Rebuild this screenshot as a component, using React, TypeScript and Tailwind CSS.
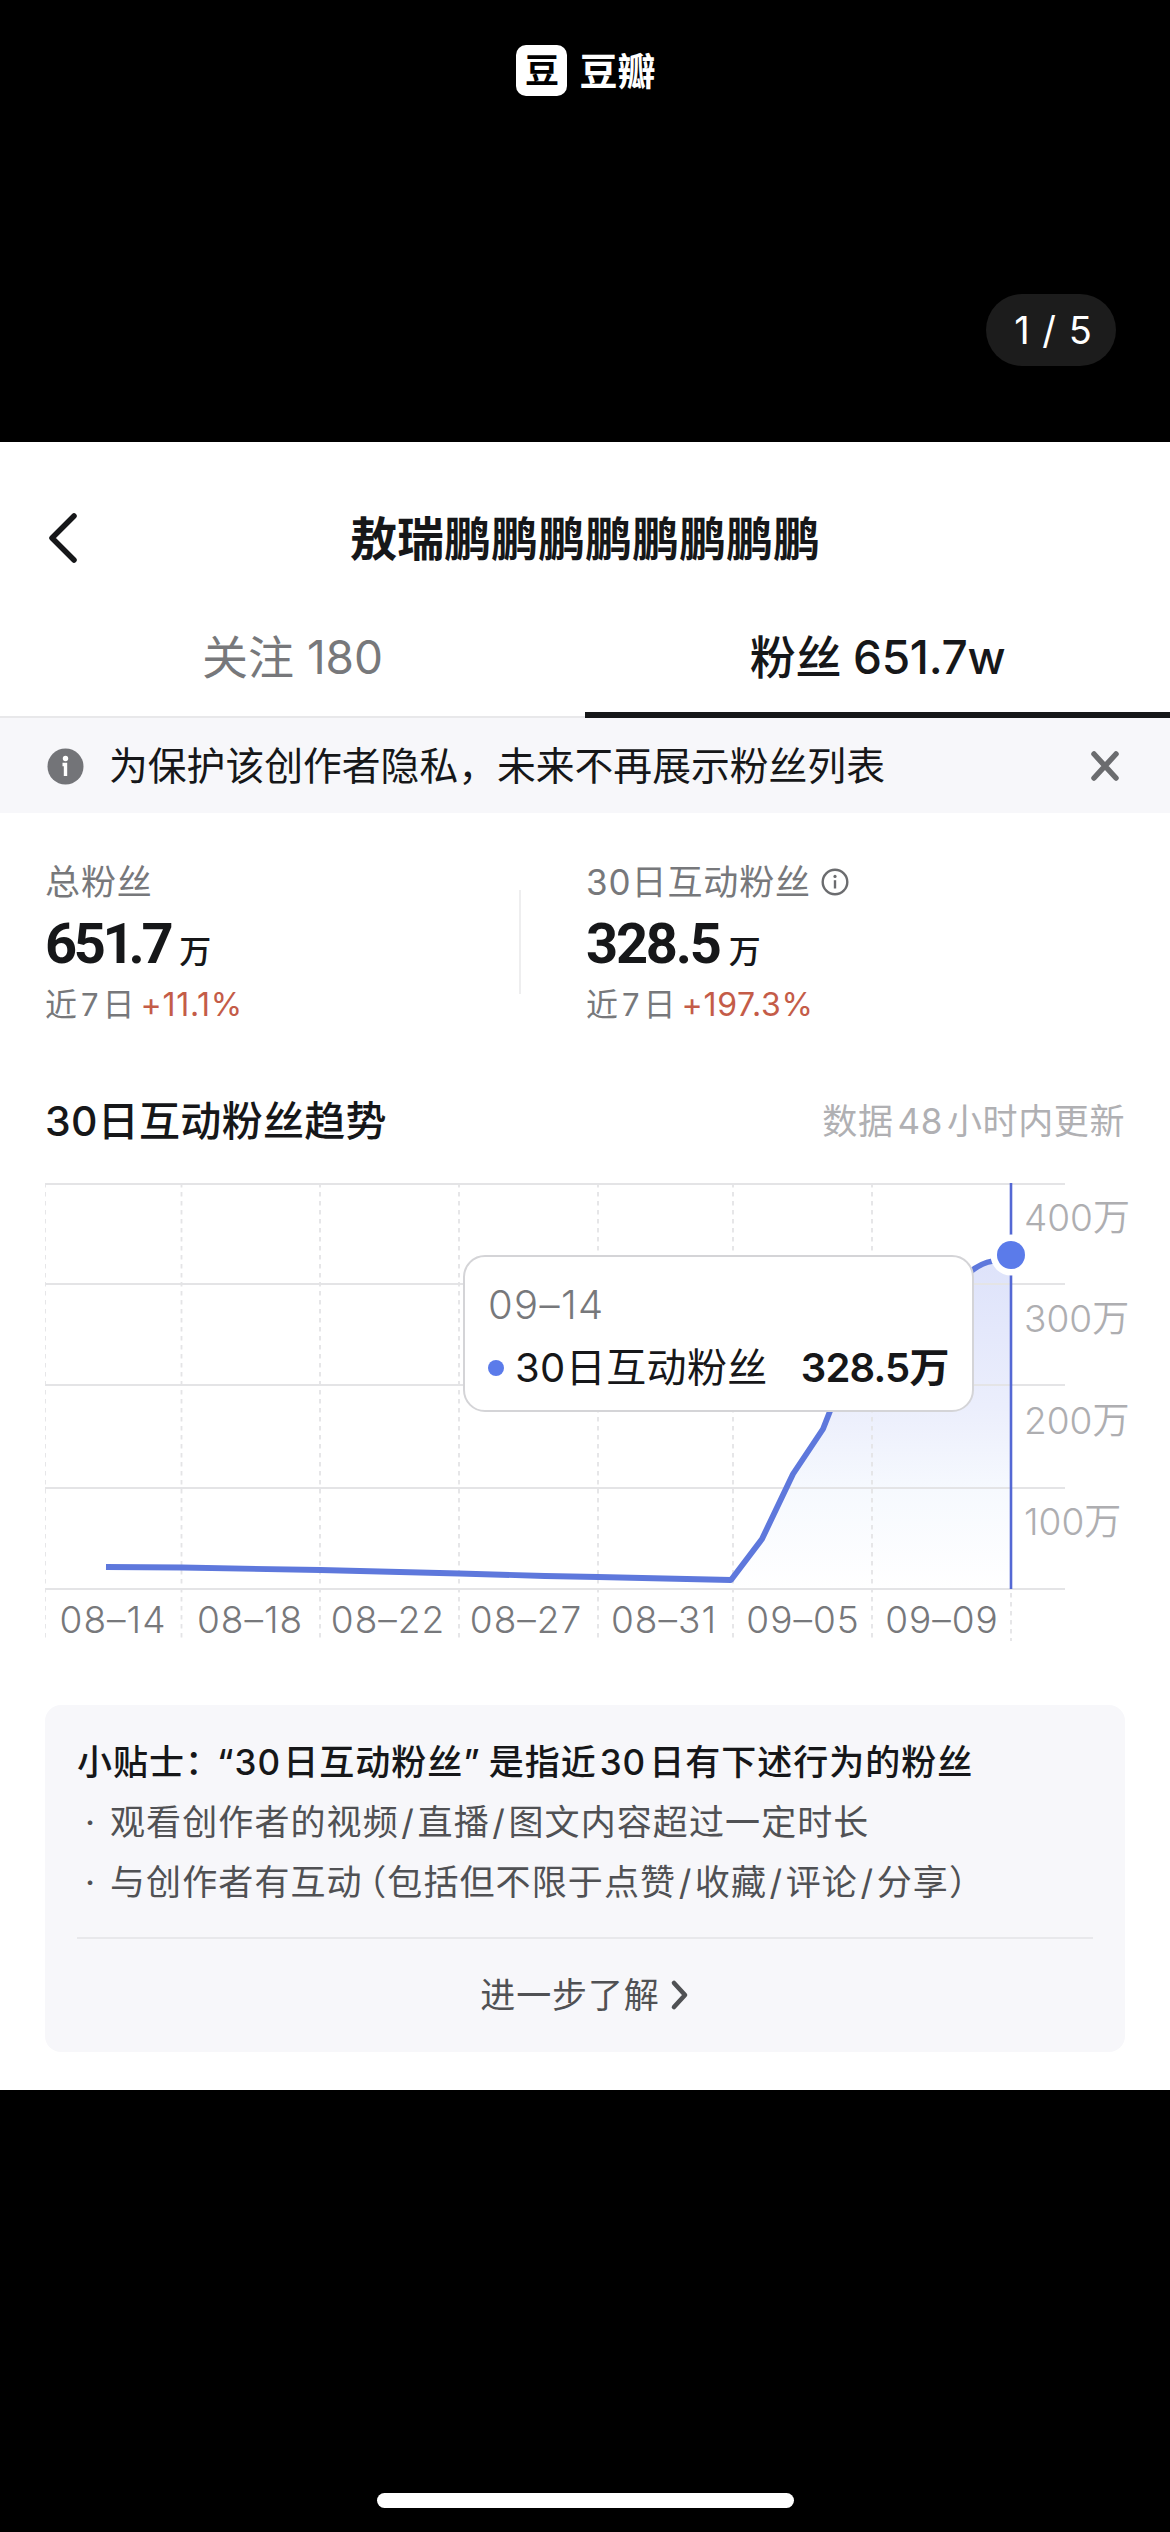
import React from 'react';
import { clsx } from 'clsx';

const GRID_Y = [1, 101, 202, 305, 406];
const GRID_X = [0, 136.5, 275, 414, 553, 688, 827];

const DAYS = [
  { label: '08–14', x: 68 },
  { label: '08–18', x: 205 },
  { label: '08–22', x: 343 },
  { label: '08–27', x: 481 },
  { label: '08–31', x: 619 },
  { label: '09–05', x: 758 },
  { label: '09–09', x: 897 },
];

const LEVELS = [
  { label: '400万', y: 48 },
  { label: '300万', y: 149 },
  { label: '200万', y: 251 },
  { label: '100万', y: 352 },
];

const FLAT = 'M61 384L137 384.5L275 387L414 390.5L500 393L553 394L686 397';
const RISE = 'L717 356L748 291L778 246L800 190L850 140L900 108L925 89Q936 80 948 78L966 72';

const TIPS = [
  '观看创作者的视频/直播/图文内容超过一定时长',
  '与创作者有互动（包括但不限于点赞/收藏/评论/分享）',
];

type StatProps = {
  label: string;
  value: React.ReactNode;
  growth: string;
  info?: boolean;
  className?: string;
};

function Stat({ label, value, growth, info, className }: StatProps) {
  return (
    <div className={clsx('flex flex-col', className)}>
      <div className="flex h-10 items-center text-[35px] leading-10 tracking-[0.9px] text-[#77787b]">
        <span>{label}</span>
        {info && (
          <svg className="ml-2.5 size-7" viewBox="0 0 28 28" fill="none" stroke="#6b6c6f">
            <circle cx="14" cy="14" r="12.3" strokeWidth="2.4" />
            <path d="M14 12.2V20.5" strokeWidth="2.4" />
            <circle cx="14" cy="8.4" r="1.6" fill="#6b6c6f" stroke="none" />
          </svg>
        )}
      </div>
      <div className="mt-[9px] flex h-[66px] items-baseline text-[#161719]">
        <span className="font-['Roboto'] text-[56px] leading-[66px] font-bold tracking-[-2.2px]">{value}</span>
        <span className="ml-[9px] text-[32px] font-medium">万</span>
      </div>
      <div className="mt-2 flex h-10 items-center text-[32px] leading-10 text-[#77787b]">
        <span>近</span>
        <span className="mx-1 text-[31px]">7</span>
        <span>日</span>
        <span className="ml-1.5 text-[32px] tracking-[0.7px] text-[#c45c48]">{growth}</span>
      </div>
    </div>
  );
}

// Slashes get a little air, the opening bracket takes half a cell
function TipText({ text }: { text: string }) {
  return (
    <span>
      {text.split(/([/（])/).map((part, i) => {
        if (part === '/') return <span key={i} className="mx-[2.5px]">/</span>;
        if (part === '（') return <span key={i} className="ml-1.5 [font-feature-settings:'halt']">（</span>;
        return part;
      })}
    </span>
  );
}

function TrendChart() {
  return (
    <div className="relative mt-[38px] ml-[45px] h-[460px] w-[1085px]">
      <svg width="1085" height="460" viewBox="0 0 1085 460" fill="none">
        <defs>
          <linearGradient id="area" x1="0" y1="72" x2="0" y2="406" gradientUnits="userSpaceOnUse">
            <stop offset="0" stopColor="#dde2fa" />
            <stop offset="0.45" stopColor="#ebeefc" />
            <stop offset="0.7" stopColor="#f6f9fe" />
            <stop offset="1" stopColor="#ffffff" />
          </linearGradient>
        </defs>
        <path d={`M686 397${RISE}V406H686Z`} fill="url(#area)" />
        {GRID_Y.map((y) => (
          <path key={y} d={`M0 ${y}H1020`} stroke="#e4e4e6" strokeWidth="2" />
        ))}
        {GRID_X.map((x) => (
          <path key={x} d={`M${x} 0V458`} stroke="#e4e4e6" strokeWidth="1.8" strokeDasharray="4.5 4.5" />
        ))}
        <path d="M966 410V458" stroke="#e4e4e6" strokeWidth="1.8" strokeDasharray="4.5 4.5" />
        <path d={FLAT + RISE} stroke="#5e78dc" strokeWidth="5.8" strokeLinejoin="round" />
        <path d="M966 0V406" stroke="#5468d4" strokeWidth="2.6" />
        <circle cx="966" cy="72" r="20.5" fill="#fff" />
        <circle cx="966" cy="72" r="14" fill="#5b7bea" />
        <g fill="#77787b" fontSize="37" letterSpacing="1" textAnchor="middle" fontWeight="350">
          {DAYS.map((d) => (
            <text key={d.label} x={d.x} y="450">{d.label}</text>
          ))}
        </g>
        <g fill="#aeaeb1" fontSize="37" fontWeight="350">
          {LEVELS.map((l) => (
            <text key={l.label} x="979" y={l.y}>{l.label}</text>
          ))}
        </g>
      </svg>

      {/* Tooltip */}
      <div className="absolute top-[72px] left-[418px] h-[157px] w-[511px] rounded-[22px] border-2 border-[#d4d4d7] bg-white pt-6 pl-[23px]">
        <div className="h-[48px] text-[40px] leading-[48px] font-[350] tracking-[1.4px] text-[#77787b]">09–14</div>
        <div className="mt-[14px] flex h-[50px] items-center text-[40px] leading-[50px] text-[#161719]">
          <span className="mr-[11px] size-4 rounded-full bg-[#5b7bea]" />
          <span className="tracking-[0.4px]">30日互动粉丝</span>
          <span className="ml-[33px] font-semibold tracking-[-0.8px]">328.5万</span>
        </div>
      </div>
    </div>
  );
}

export default function App() {
  return (
    <div lang="zh-CN" className="flex h-[2532px] w-[1170px] flex-col overflow-hidden bg-black font-['Inter','Noto_Sans_CJK_SC',sans-serif] whitespace-nowrap">
      <div className="relative h-[442px] shrink-0">
        <div className="flex justify-center pt-[45px] pl-0.5">
          <div className="flex h-[51px] items-center gap-3 text-white">
            <div className="flex size-[51px] items-center justify-center rounded-[10px] bg-white text-[34px] leading-none font-bold text-black">豆</div>
            <span className="text-[38px] leading-none font-bold">豆瓣</span>
          </div>
        </div>
        <div className="absolute top-[294px] left-[986px] flex h-[72px] w-[130px] items-center justify-center rounded-full bg-[#1c1c1c] pl-1 text-[38px] text-white [word-spacing:2px]">1 / 5</div>
      </div>

      <div className="flex h-[1648px] shrink-0 flex-col bg-white">
        <header className="relative flex h-[156px] items-center justify-center pt-9">
          <svg className="absolute top-[69px] left-[46px]" width="34" height="54" viewBox="0 0 34 54" fill="none" stroke="#161719" strokeWidth="5.5" strokeLinecap="round" strokeLinejoin="round">
            <path d="M28 5L6 27L28 49" />
          </svg>
          <h1 className="text-[47px] leading-none font-bold text-[#161719]">敖瑞鹏鹏鹏鹏鹏鹏鹏鹏</h1>
        </header>

        <nav className="grid h-[120px] grid-cols-2 border-b-2 border-[#e8e8ea] text-[46px]">
          <div className="flex items-center justify-center text-[#77787b]">关注 180</div>
          <div className="relative flex items-center justify-center font-medium tracking-[-0.3px] text-[#161719]">
            粉丝 651.7w
            <div className="absolute -bottom-0.5 left-0 h-[6px] w-full bg-[#161719]" />
          </div>
        </nav>

        <div className="flex h-[95px] items-center bg-[#f7f7fa] pt-px pr-[50px] pl-[47px]">
          <svg width="37" height="37" viewBox="0 0 37 37">
            <circle cx="18.5" cy="18.5" r="18" fill="#737478" />
            <circle cx="18.5" cy="10.5" r="2.7" fill="#fff" />
            <path d="M15.5 16.5H18.5V28" stroke="#fff" strokeWidth="3.4" fill="none" />
          </svg>
          <span className="ml-[25px] text-[38.8px] text-[#161719]">为保护该创作者隐私，未来不再展示粉丝列表</span>
          <svg className="ml-auto" width="30" height="32" viewBox="0 0 30 32" stroke="#6b6c6f" strokeWidth="5.5" strokeLinecap="round">
            <path d="M4 4L26 28M26 4L4 28" />
          </svg>
        </div>

        <section className="flex pt-[49px] pl-[45px]">
          <Stat
            className="w-[474px]"
            label="总粉丝"
            value={<span className="tracking-[-3.4px]">65<span className="tracking-[-6px]">1</span>.7</span>}
            growth="+11.1%"
          />
          <div className="mt-7 h-[104px] w-0.5 bg-[#eeeeef]" />
          <Stat className="ml-[65px]" label="30日互动粉丝" value="328.5" growth="+197.3%" info />
        </section>

        <div className="mt-[72px] flex h-12 items-center justify-between pr-[45px] pl-[45px]">
          <h2 className="text-[41px] leading-none font-medium tracking-[0.3px] text-[#161719]">30日互动粉丝趋势</h2>
          <span className="text-[35px] tracking-[0.6px] text-[#b0b0b3]">
            数据<span className="mx-1">48</span>小时内更新
          </span>
        </div>

        <TrendChart />

        <section className="mx-[45px] mt-[62px] flex h-[347px] flex-col rounded-2xl bg-[#f7f7fa] px-8 pt-[27px]">
          <h3 className="h-[60px] text-[35px] leading-[60px] font-medium tracking-[1px] text-[#161719]">
            小贴士：<span className="-ml-1">“</span>30<span className="ml-0.5">日</span>互动粉丝<span className="mr-2">”</span>是指近<span className="mx-[3px]">30</span>日有下述行为的粉丝
          </h3>
          {TIPS.map((tip) => (
            <p key={tip} className="flex h-[60px] text-[35px] leading-[60px] tracking-[1.1px] text-[#505154]">
              <span className="w-[33px] pl-2">·</span>
              <TipText text={tip} />
            </p>
          ))}
          <div className="mt-[25px] h-0.5 bg-[#e8e8eb]" />
          <div className="flex h-[115px] items-center justify-center text-[35px] tracking-[0.9px] text-[#505154]">
            进一步了解
            <svg className="ml-2.5" width="20" height="32" viewBox="0 0 20 32" fill="none" stroke="#505154" strokeWidth="4.6" strokeLinecap="round" strokeLinejoin="round">
              <path d="M4 4L15 16L4 28" />
            </svg>
          </div>
        </section>
      </div>

      <div className="mt-auto mb-6 flex h-[15px] w-full shrink-0 justify-center">
        <div className="h-full w-[417px] rounded-full bg-white" />
      </div>
    </div>
  );
}
